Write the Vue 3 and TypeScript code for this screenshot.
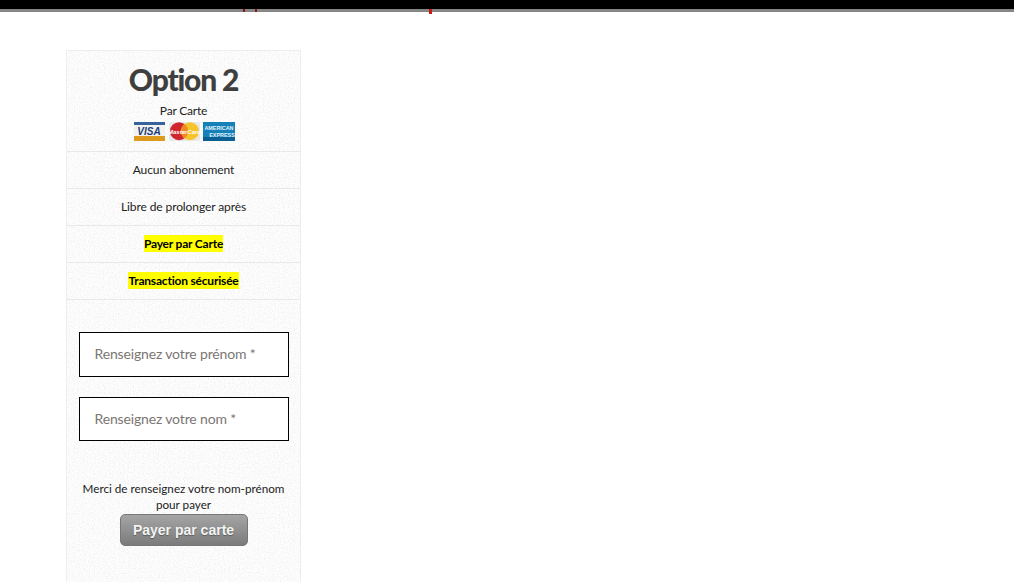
<script setup lang="ts">
const rows = [
  { label: 'Aucun abonnement', strong: false },
  { label: 'Libre de prolonger après', strong: false },
  { label: 'Payer par Carte', strong: true },
  { label: 'Transaction sécurisée', strong: true },
]
</script>

<template>
  <div class="page">
    <div class="topbar">
      <i class="tick t1"></i><i class="tick t2"></i><i class="tick t3"></i>
    </div>
    <section class="card">
      <svg class="texture" aria-hidden="true">
        <filter id="grain" x="0" y="0" width="100%" height="100%">
          <feTurbulence type="fractalNoise" baseFrequency="0.8" numOctaves="1" seed="4" />
          <feColorMatrix type="matrix" values="0 0 0 0 0.88  0 0 0 0 0.88  0 0 0 0 0.88  4 0 0 0 -1.9" />
        </filter>
        <rect width="100%" height="100%" filter="url(#grain)" />
      </svg>
      <header class="head">
        <h2>Option 2</h2>
        <p>Par Carte</p>
        <div class="logos">
          <svg width="31" height="19" viewBox="0 0 31 19">
            <rect width="31" height="19" fill="#f2f1ec" />
            <rect width="31" height="3" fill="#37639c" />
            <rect y="14" width="31" height="5" fill="#dd9a1c" />
            <text x="15" y="12.5" text-anchor="middle" class="visa">VISA</text>
          </svg>
          <svg class="mc-logo" width="31" height="19" viewBox="0 0 31 19">
            <rect width="31" height="19" rx="2" fill="#e8e8e8" />
            <circle cx="10" cy="9.2" r="9" fill="#d0242e" />
            <circle cx="21" cy="9.2" r="9" fill="#f6c42d" />
            <path d="M15.5 2a9 9 0 0 1 0 14.4a9 9 0 0 1 0-14.4z" fill="#ee8a22" />
            <text x="15.5" y="11.5" text-anchor="middle" class="mc">MasterCard</text>
          </svg>
          <svg width="32" height="19" viewBox="0 0 32 19">
            <rect width="32" height="19" fill="#1481b8" />
            <rect y="15" width="32" height="4" fill="#0b5f92" />
            <text x="16" y="8" text-anchor="middle" class="amex">AMERICAN</text>
            <text x="19" y="14.5" text-anchor="middle" class="amex">EXPRESS</text>
          </svg>
        </div>
      </header>
      <ul class="rows">
        <li v-for="row in rows" :key="row.label">
          <mark v-if="row.strong">{{ row.label }}</mark>
          <template v-else>{{ row.label }}</template>
        </li>
      </ul>
      <form class="form" @submit.prevent>
        <input type="text" placeholder="Renseignez votre prénom *" />
        <input type="text" placeholder="Renseignez votre nom *" />
        <p>Merci de renseignez votre nom-prénom pour payer</p>
        <button type="button">Payer par carte</button>
      </form>
    </section>
  </div>
</template>

<style>
html, body { margin: 0; background: #fff; overflow: hidden; }
</style>

<style scoped>
.page {
  height: 582px;
  overflow: hidden;
  font-family: Lato, "Noto Sans", sans-serif;
  font-variant-ligatures: none;
  color: #222;
}
.topbar {
  position: relative;
  height: 9px;
  background: #000;
  border-bottom: 3px solid #868686;
}
.tick { position: absolute; top: 9px; width: 2px; height: 3px; background: #8a1410; }
.t1 { left: 243px; }
.t2 { left: 255px; }
.t3 { left: 429px; width: 3px; height: 5px; background: #cc1a12; }
.card {
  position: relative;
  width: 233px;
  height: 532px;
  margin: 38px 0 0 66px;
  border: 1px solid #eeeeee;
  border-bottom: 0;
  background: #fdfdfd;
  text-align: center;
}
.texture { position: absolute; inset: 0; width: 100%; height: 100%; }
.head, .rows, .form { position: relative; }
.head { height: 100px; border-bottom: 1px solid #e9e9e9; }
h2 {
  margin: 0;
  padding-top: 10px;
  height: 37px;
  font-size: 30px;
  line-height: 37px;
  font-weight: 900;
  letter-spacing: -1.2px;
  color: #3f3f3f;
}
.head p {
  margin: 5px 0 0;
  font-size: 12px;
  line-height: 16px;
  letter-spacing: -0.2px;
}
.logos { display: flex; justify-content: center; gap: 3px; margin-top: 3px; padding-left: 2px; }
.logos svg { display: block; }
.logos .mc-logo { margin-left: 1px; }
.visa { font: italic 700 10px "Liberation Sans", sans-serif; fill: #1c3f7c; }
.mc { font: italic 700 6px "Liberation Sans", sans-serif; fill: #fff; }
.amex { font: 700 5.4px "Liberation Sans", sans-serif; fill: #e4f2fa; }
.rows { list-style: none; margin: 0; padding: 0; }
.rows li {
  box-sizing: border-box;
  height: 37px;
  line-height: 36px;
  font-size: 12px;
  letter-spacing: -0.1px;
  border-bottom: 1px solid #e9e9e9;
}
mark { background: #ffff00; color: #000; font-weight: 700; padding: 1px 0; letter-spacing: -0.2px; }
.form { display: flex; flex-direction: column; align-items: center; padding-top: 32px; }
input {
  box-sizing: border-box;
  width: 210px;
  height: 45px;
  margin-bottom: 20px;
  padding: 0 15px 2px;
  border: 1px solid #000;
  border-radius: 0;
  background: #fff;
  outline: 0;
  font: 14px Lato, "Noto Sans", sans-serif;
  letter-spacing: -0.15px;
}
input:nth-child(2) { height: 44px; margin-bottom: 0; }
input::placeholder { color: #7b7672; opacity: 1; }
.form p {
  width: 215px;
  margin: 39px 0 0;
  font-size: 11.7px;
  line-height: 16px;
}
button {
  box-sizing: border-box;
  width: 128px;
  height: 32px;
  margin-top: 2px;
  border: 1px solid #777;
  border-radius: 5px;
  background: linear-gradient(#a5a5a5, #7b7b7b);
  color: #f4f4f4;
  font: 700 14px "Liberation Sans", sans-serif;
  text-shadow: 0 1px 1px rgba(0, 0, 0, 0.35);
}
</style>
